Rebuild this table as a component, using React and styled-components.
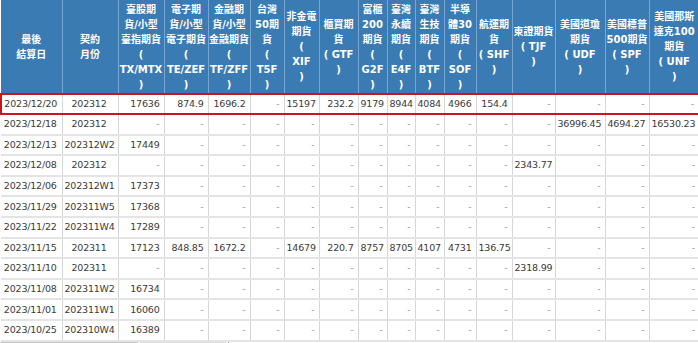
import React from 'react';
import styled, { createGlobalStyle } from 'styled-components';

const GlobalStyle = createGlobalStyle`
  html, body {
    margin: 0;
    padding: 0;
    background: #ffffff;
    overflow: hidden;
  }
`;

const Page = styled.div`
  width: 698px;
  overflow: hidden;
  font-family: "DejaVu Sans", "Noto Sans CJK TC", sans-serif;
`;

const Table = styled.table`
  width: 698px;
  table-layout: fixed;
  border-collapse: collapse;
`;

const HeadCell = styled.th`
  background: #3b7bb3;
  color: #ffffff;
  font-family: "DejaVu Sans", "Noto Sans CJK TC", sans-serif;
  font-weight: bold;
  font-size: 10px;
  line-height: 15px;
  height: 93px;
  padding: 0;
  text-align: center;
  vertical-align: middle;
  border-left: 1px solid #78a6cf;
  white-space: nowrap;
  overflow: hidden;

  &:first-child {
    border-left: none;
  }
`;

const Row = styled.tr`
  td {
    height: 18.6px;
    border-bottom: 2px solid #e4e4e4;
    border-left: 1px solid #d6d6d6;
  }

  ${({ $highlight }) =>
    $highlight &&
    `
    td {
      height: 18px;
      border-top: 2px solid #c8161d;
      border-bottom: 2px solid #c8161d;
    }
    td:first-child { border-left: 2px solid #c8161d; }
    td:last-child { border-right: 2px solid #c8161d; }
  `}
`;

const Cell = styled.td`
  padding: 0 4px 0 2px;
  font-size: 9.5px;
  line-height: 12px;
  letter-spacing: -0.2px;
  color: ${({ $dash }) => ($dash ? '#9a9a9a' : '#3a3a3a')};
  text-align: ${({ $center }) => ($center ? 'center' : 'right')};
  white-space: nowrap;
  overflow: hidden;
  vertical-align: middle;

  &:first-child {
    border-left: none;
  }
`;

const ScrollStrip = styled.div`
  display: flex;
  align-items: stretch;
  height: 4px;
  gap: 2px;
`;

const Thumb = styled.div`
  width: ${({ $w }) => $w}px;
  background: ${({ $tone }) => $tone};
`;

const ThumbEdge = styled.div`
  width: 1px;
  background: #8a8a8a;
`;

const widths = [61, 56, 46, 44, 42, 34, 35, 39, 29, 28, 29, 32, 36, 43, 50, 44, 50];

const headers = [
  ['最後', '結算日'],
  ['契約', '月份'],
  ['臺股期', '貨/小型', '臺指期貨', '(', 'TX/MTX', ')'],
  ['電子期', '貨/小型', '電子期貨', '(', 'TE/ZEF', ')'],
  ['金融期', '貨/小型', '金融期貨', '(', 'TF/ZFF', ')'],
  ['台灣', '50期', '貨', '(', 'T5F', ')'],
  ['非金電', '期貨', '(', 'XIF', ')'],
  ['櫃買期', '貨', '( GTF', ')'],
  ['富櫃', '200', '期貨', '(', 'G2F', ')'],
  ['臺灣', '永續', '期貨', '(', 'E4F', ')'],
  ['臺灣', '生技', '期貨', '(', 'BTF', ')'],
  ['半導', '體30', '期貨', '(', 'SOF', ')'],
  ['航運期', '貨', '( SHF', ')'],
  ['東證期貨', '( TJF', ')'],
  ['美國道瓊', '期貨', '( UDF', ')'],
  ['美國標普', '500期貨', '( SPF', ')'],
  ['美國那斯', '達克100', '期貨', '( UNF', ')'],
];

const dashes = (n) => Array(n).fill('-');

const rows = [
  ['2023/12/20', '202312', '17636', '874.9', '1696.2', '-', '15197', '232.2', '9179', '8944', '4084', '4966', '154.4', '-', '-', '-', '-'],
  ['2023/12/18', '202312', ...dashes(12), '36996.45', '4694.27', '16530.23'],
  ['2023/12/13', '202312W2', '17449', ...dashes(14)],
  ['2023/12/08', '202312', ...dashes(11), '2343.77', '-', '-', '-'],
  ['2023/12/06', '202312W1', '17373', ...dashes(14)],
  ['2023/11/29', '202311W5', '17368', ...dashes(14)],
  ['2023/11/22', '202311W4', '17289', ...dashes(14)],
  ['2023/11/15', '202311', '17123', '848.85', '1672.2', '-', '14679', '220.7', '8757', '8705', '4107', '4731', '136.75', '-', '-', '-', '-'],
  ['2023/11/10', '202311', ...dashes(11), '2318.99', '-', '-', '-'],
  ['2023/11/08', '202311W2', '16734', ...dashes(14)],
  ['2023/11/01', '202311W1', '16060', ...dashes(14)],
  ['2023/10/25', '202310W4', '16389', ...dashes(14)],
];

const App = () => {
  return (
    <Page>
      <GlobalStyle />
      <Table>
        <colgroup>
          {widths.map((w, i) => (
            <col key={i} style={{ width: w }} />
          ))}
        </colgroup>
        <thead>
          <tr>
            {headers.map((lines, i) => (
              <HeadCell key={i}>
                {lines.map((line, j) => (
                  <React.Fragment key={j}>
                    {j > 0 && <br />}
                    {line}
                  </React.Fragment>
                ))}
              </HeadCell>
            ))}
          </tr>
        </thead>
        <tbody>
          {rows.map((row, r) => (
            <Row key={r} $highlight={r === 0}>
              {row.map((val, c) => (
                <Cell key={c} $center={c < 2} $dash={val === '-'}>
                  {val}
                </Cell>
              ))}
            </Row>
          ))}
        </tbody>
      </Table>
      <ScrollStrip>
        <Thumb $w={138} $tone="#c6c6c6" />
        <Thumb $w={86} $tone="#dedede" />
        <ThumbEdge />
      </ScrollStrip>
    </Page>
  );
};

export default App;
